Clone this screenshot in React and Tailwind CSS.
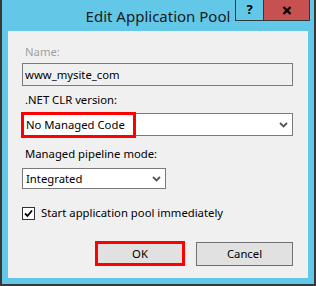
export default function App() {
  const font = { fontFamily: '"Noto Sans", "Open Sans", sans-serif' };
  return (
    <div
      className="w-[316px] h-[286px] bg-[#63c8e8] border-x-2 border-b-2 border-[#383838] flex flex-col text-black"
      style={font}
    >
      <div className="relative h-[31px] shrink-0 flex justify-center">
        <div className="text-[15px] leading-[20px] pt-[6px] text-[#1a1a1a]">Edit Application Pool</div>
        <div className="absolute top-0 right-[4px] flex">
          <div className="w-[28px] h-[21px] border-l border-b border-[#2f3a40] flex items-center justify-center text-[13px] font-bold leading-none pb-[1px]">
            ?
          </div>
          <div className="w-[47px] h-[21px] border-x border-b border-[#2f3a40] bg-[#c75050] flex items-center justify-center">
            <svg width="10" height="9" viewBox="0 0 10 9">
              <path d="M1.5 1 L8.5 8 M8.5 1 L1.5 8" stroke="#000" strokeWidth="2.4" fill="none" />
            </svg>
          </div>
        </div>
      </div>
      <div className="flex-1 mx-[6px] mb-[6px] bg-[#f0f0f0] pt-[13px] pl-[14px] pr-[15px] flex flex-col text-[11.3px] leading-[16px]">
        <div className="pl-[3px] text-[#a0a0a0]">Name:</div>
        <div className="mt-[3px] h-[23px] border border-[#7a7a7a] flex items-center pl-[2px]">www_mysite_com</div>
        <div className="mt-[6px] pl-[3px]">.NET CLR version:</div>
        <div className="mt-[5px] relative h-[23px] border border-[#7a7a7a] bg-white flex items-center justify-between pl-[3px] pr-[4px]">
          <span>No Managed Code</span>
          <svg width="9" height="6" viewBox="0 0 9 6">
            <path d="M1 1 L4.5 4.5 L8 1" stroke="#555" strokeWidth="1.8" fill="none" />
          </svg>
          <div className="absolute -left-[2px] -top-[2px] w-[115px] h-[26px] border-[3px] border-[#ff0000]" />
        </div>
        <div className="mt-[10px] pl-[3px]">Managed pipeline mode:</div>
        <div className="mt-[6px] w-[144px] h-[21px] border border-[#7a7a7a] bg-white flex items-center justify-between pl-[3px] pr-[4px]">
          <span>Integrated</span>
          <svg width="9" height="6" viewBox="0 0 9 6">
            <path d="M1 1 L4.5 4.5 L8 1" stroke="#555" strokeWidth="1.8" fill="none" />
          </svg>
        </div>
        <div className="mt-[16px] flex items-center">
          <div className="w-[13px] h-[13px] border border-[#333] bg-white flex items-center justify-center">
            <svg width="9" height="9" viewBox="0 0 9 9">
              <path d="M1 4.5 L3.5 7 L8 1.5" stroke="#000" strokeWidth="1.8" fill="none" />
            </svg>
          </div>
          <span className="ml-[6px]">Start application pool immediately</span>
        </div>
        <div className="mt-[20px] flex justify-end items-center gap-[11px]">
          <div className="w-[90px] h-[25px] border-[3px] border-[#ff0000] bg-[#e1e1e1] flex items-center justify-center">OK</div>
          <div className="w-[97px] h-[24px] border border-[#707070] bg-[#e1e1e1] flex items-center justify-center">Cancel</div>
        </div>
      </div>
    </div>
  );
}
